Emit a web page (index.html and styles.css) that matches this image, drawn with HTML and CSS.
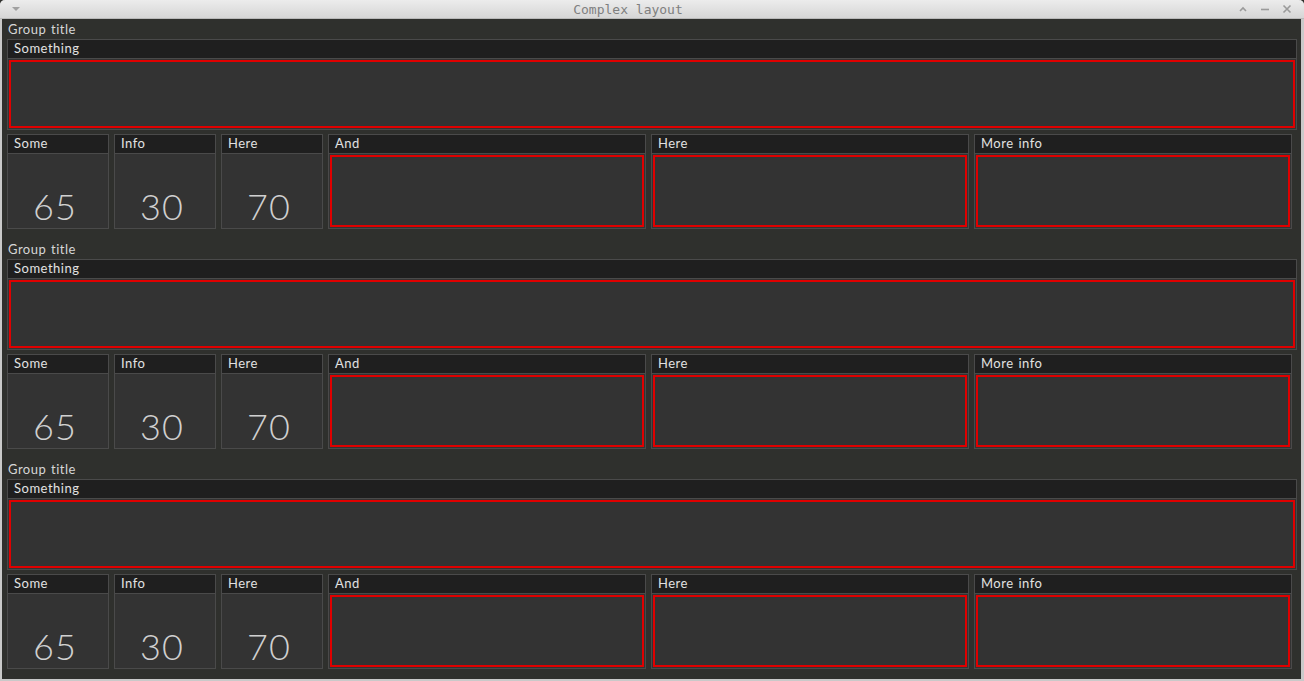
FILE: index.html
```html
<!DOCTYPE html>
<html>
<head>
<meta charset="utf-8">
<link rel="stylesheet" href="styles.css">
</head>
<body>
<div class="window">
  <div class="titlebar">
    <svg class="menu-btn" width="10" height="6" viewBox="0 0 10 6"><path d="M1 1 L9 1 L5 5 Z" fill="#a0a0a0"/></svg>
    <div class="title">Complex layout</div>
    <div class="controls">
      <svg width="10" height="8" viewBox="0 0 10 8"><path d="M2 6 L5 3 L8 6" fill="none" stroke="#9a9a9a" stroke-width="1.6"/></svg>
      <svg width="10" height="8" viewBox="0 0 10 8"><path d="M1 4.5 H9" stroke="#9a9a9a" stroke-width="1.6"/></svg>
      <svg width="10" height="10" viewBox="0 0 10 10"><path d="M1.5 1.5 L8.5 8.5 M8.5 1.5 L1.5 8.5" stroke="#9a9a9a" stroke-width="1.6"/></svg>
    </div>
  </div>
  <div class="content">
    <section class="group">
      <div class="group-title">Group title</div>
      <div class="panel wide"><div class="head">Something</div><div class="body"><div class="red"></div></div></div>
      <div class="row">
        <div class="panel"><div class="head">Some</div><div class="body num">65</div></div>
        <div class="panel"><div class="head">Info</div><div class="body num">30</div></div>
        <div class="panel"><div class="head">Here</div><div class="body num">70</div></div>
        <div class="panel"><div class="head">And</div><div class="body"><div class="red"></div></div></div>
        <div class="panel"><div class="head">Here</div><div class="body"><div class="red"></div></div></div>
        <div class="panel"><div class="head">More info</div><div class="body"><div class="red"></div></div></div>
      </div>
    </section>
    <section class="group">
      <div class="group-title">Group title</div>
      <div class="panel wide"><div class="head">Something</div><div class="body"><div class="red"></div></div></div>
      <div class="row">
        <div class="panel"><div class="head">Some</div><div class="body num">65</div></div>
        <div class="panel"><div class="head">Info</div><div class="body num">30</div></div>
        <div class="panel"><div class="head">Here</div><div class="body num">70</div></div>
        <div class="panel"><div class="head">And</div><div class="body"><div class="red"></div></div></div>
        <div class="panel"><div class="head">Here</div><div class="body"><div class="red"></div></div></div>
        <div class="panel"><div class="head">More info</div><div class="body"><div class="red"></div></div></div>
      </div>
    </section>
    <section class="group">
      <div class="group-title">Group title</div>
      <div class="panel wide"><div class="head">Something</div><div class="body"><div class="red"></div></div></div>
      <div class="row">
        <div class="panel"><div class="head">Some</div><div class="body num">65</div></div>
        <div class="panel"><div class="head">Info</div><div class="body num">30</div></div>
        <div class="panel"><div class="head">Here</div><div class="body num">70</div></div>
        <div class="panel"><div class="head">And</div><div class="body"><div class="red"></div></div></div>
        <div class="panel"><div class="head">Here</div><div class="body"><div class="red"></div></div></div>
        <div class="panel"><div class="head">More info</div><div class="body"><div class="red"></div></div></div>
      </div>
    </section>
  </div>
</div>
</body>
</html>
```
FILE: styles.css
```css
html, body {
  margin: 0;
  padding: 0;
  width: 1304px;
  height: 681px;
  overflow: hidden;
  background: #2f302d;
}
.window {
  box-sizing: border-box;
  width: 1304px;
  height: 681px;
  border-left: 2px solid #c9c9c9;
  border-right: 3px solid #c9c9c9;
  border-bottom: 2px solid #c9c9c9;
  border-radius: 5px 5px 0 0;
  display: flex;
  flex-direction: column;
  background: #2f302d;
  font-family: Lato, "Open Sans", sans-serif;
  color: #d8d8d8;
}
.titlebar {
  height: 19px;
  flex: none;
  background: linear-gradient(#ececec, #d6d6d6);
  margin: 0 -3px 0 -2px;
  border-radius: 5px 5px 0 0;
  display: flex;
  align-items: center;
  border-bottom: 1px solid #b9b9b9;
  box-sizing: border-box;
}
.menu-btn {
  margin-left: 11px;
}
.title {
  flex: 1;
  text-align: center;
  font-family: "DejaVu Sans Mono", "Liberation Mono", monospace;
  font-size: 13px;
  color: #7f7f7f;
  margin-left: -3px;
  margin-top: 1px;
}
.controls {
  display: flex;
  align-items: center;
  gap: 12px;
  margin-right: 12px;
}
.content {
  flex: 1;
  padding: 0 4px 0 5px;
}
.group {
  margin-bottom: 10px;
}
.group-title {
  height: 20px;
  line-height: 21px;
  font-size: 13px;
  letter-spacing: 0.5px;
  word-spacing: 1px;
  padding-left: 1px;
  color: #d6d6d6;
}
.panel {
  border: 1px solid #4a4a4a;
  background: #333333;
  display: flex;
  flex-direction: column;
}
.panel.wide {
  height: 91px;
  box-sizing: border-box;
}
.head {
  height: 18px;
  flex: none;
  background: #1f1f1f;
  border-bottom: 1px solid #4a4a4a;
  font-size: 13px;
  letter-spacing: 0.5px;
  word-spacing: 1px;
  line-height: 17px;
  padding-left: 6px;
  color: #e2e2e2;
}
.body {
  flex: 1;
  padding: 1px;
  display: flex;
}
.red {
  flex: 1;
  border: 2px solid #e00000;
}
.row {
  margin-top: 4px;
  display: grid;
  grid-template-columns: 102px 102px 102px 318px 318px 318px;
  column-gap: 5px;
  height: 95px;
}
.row .panel {
  box-sizing: border-box;
}
.num {
  justify-content: center;
  align-items: flex-end;
  font-size: 36px;
  font-weight: 300;
  letter-spacing: 1px;
  line-height: 36px;
  padding: 0 6px 4px 0;
  color: #d0d0d0;
}
```
